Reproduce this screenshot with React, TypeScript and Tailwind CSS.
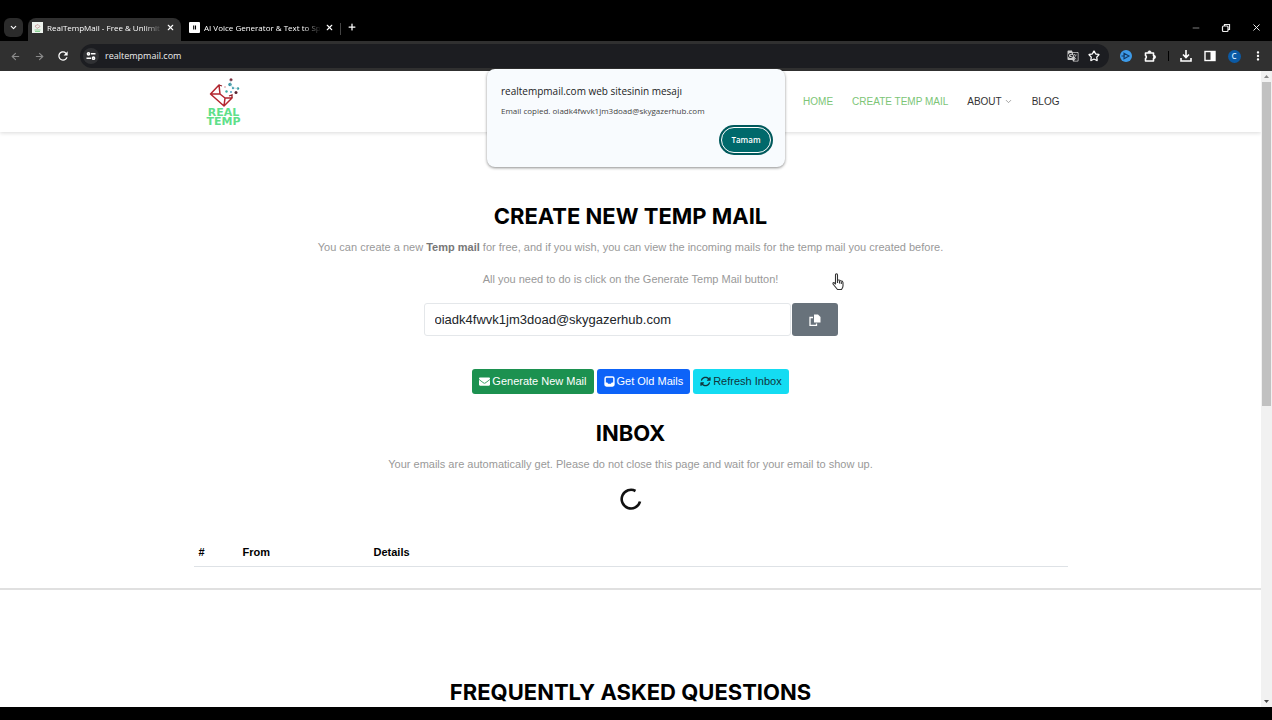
import React, { useState } from 'react';
import {
  ArrowLeft,
  ArrowRight,
  ChevronDown,
  Minus,
  Plus,
  Star,
  X,
} from 'lucide-react';
import { FaEnvelope } from 'react-icons/fa';
import { FaArrowsRotate } from 'react-icons/fa6';
import { MdGTranslate, MdMoreVert, MdRefresh } from 'react-icons/md';

const EMAIL = 'oiadk4fwvk1jm3doad@skygazerhub.com';

const uiFont = "font-['Open_Sans','Noto_Sans',sans-serif]";
const headingFont = "font-['Inter','Open_Sans',sans-serif]";

const TabStrip: React.FC = () => (
  <div className="flex h-6 items-end bg-black pl-1 text-white">
    <button type="button" aria-label="Search tabs" className="mb-1 flex h-[19px] w-[19px] items-center justify-center rounded-md bg-[#2b2b2b]">
      <ChevronDown size={9} strokeWidth={3} />
    </button>
    <div className="ml-[5px] flex h-[23px] w-[153px] items-center rounded-t-lg bg-[#303030] pr-1.5 pb-1 pl-1">
      <svg viewBox="0 0 11 11" className="h-[11px] w-[11px] shrink-0">
        <rect width="11" height="11" fill="#eef3ee" />
        <path d="M3 4l3-1.500 2 2-3 2z" fill="none" stroke="#c08a8a" strokeWidth=".7" />
        <path d="M2.500 8h6M3 9.500h5" stroke="#7fce8b" strokeWidth=".9" />
      </svg>
      <span className="ml-1 flex-1 mask-r-from-85% text-[8px] font-medium whitespace-nowrap">
        RealTempMail - Free &amp; Unlimit
      </span>
      <button type="button" aria-label="Close tab" className="ml-1">
        <X size={9} strokeWidth={3} />
      </button>
    </div>
    <div className="flex h-[23px] w-[155px] items-center pr-1 pb-1 pl-2">
      <svg viewBox="0 0 11 11" className="h-[11px] w-[11px] shrink-0">
        <rect width="11" height="11" rx="1" fill="#fff" />
        <path d="M4.700 3.500v4M6.500 3.500v4" stroke="#000" strokeWidth="1.100" />
      </svg>
      <span className="ml-1 flex-1 mask-r-from-85% text-[8px] font-medium whitespace-nowrap">
        AI Voice Generator &amp; Text to Sp
      </span>
      <button type="button" aria-label="Close tab" className="ml-1">
        <X size={9} strokeWidth={3} />
      </button>
    </div>
    <div className="mb-1.5 ml-1 h-3 w-px bg-[#444]" />
    <button type="button" aria-label="New tab" className="mb-[9px] ml-1.5">
      <Plus size={10} strokeWidth={3} />
    </button>
    <div className="mb-2 ml-auto flex items-center gap-5 pr-2.5">
      <button type="button" aria-label="Minimize">
        <Minus size={10} color="#999" />
      </button>
      <button type="button" aria-label="Restore">
        <svg viewBox="0 0 10 10" className="h-2.5 w-2.5" fill="none" stroke="#eee" strokeWidth="1.200">
          <rect x="1.500" y="3" width="5.500" height="5.500" rx="1" />
          <path d="M3.500 3V1.500H8.500V6.500H7" />
        </svg>
      </button>
      <button type="button" aria-label="Close">
        <X size={11} strokeWidth={2} />
      </button>
    </div>
  </div>
);

const toolButton = 'flex h-6 w-6 shrink-0 items-center justify-center';

const Toolbar: React.FC = () => (
  <div className="flex h-[30px] items-center bg-[#303030] pr-0.5 pl-[3px] text-white">
    <button type="button" aria-label="Back" className={toolButton}>
      <ArrowLeft size={11} color="#8a8a8a" strokeWidth={2.5} />
    </button>
    <button type="button" aria-label="Forward" className={toolButton}>
      <ArrowRight size={11} color="#8a8a8a" strokeWidth={2.5} />
    </button>
    <button type="button" aria-label="Reload" className={toolButton}>
      <MdRefresh size={14} />
    </button>
    <div className="ml-[5px] flex h-6 flex-1 items-center rounded-full bg-[#1c1d21] pr-[9px] pl-[3px]">
      <button type="button" aria-label="Site information" className="flex h-4 w-4 items-center justify-center rounded-full bg-[#303134]">
        <svg viewBox="0 0 10 10" className="h-2.5 w-2.5" fill="none" stroke="#fff" strokeWidth="1.500">
          <circle cx="2.500" cy="2.800" r="1.100" />
          <path d="M5 2.800h4.500M.5 7.200H5" />
          <circle cx="7.500" cy="7.200" r="1.100" />
        </svg>
      </button>
      <input
        type="text"
        aria-label="Address"
        defaultValue="realtempmail.com"
        className="ml-1.5 min-w-0 flex-1 bg-transparent text-[9px] font-medium text-[#eee] outline-none"
      />
      <button type="button" aria-label="Translate this page" className="mr-[9px]">
        <MdGTranslate size={12} color="#ccc" />
      </button>
      <button type="button" aria-label="Bookmark this page">
        <Star size={12} strokeWidth={2.5} />
      </button>
    </div>
    <button type="button" aria-label="Media extension" className={`${toolButton} ml-[5px]`}>
      <svg viewBox="0 0 12 12" className="h-3 w-3">
        <circle cx="6" cy="6" r="6" fill="#3d9be9" />
        <path d="M4 3.200l5 2.800-5 2.800zM1.500 6H5" fill="none" stroke="#123a66" strokeWidth="1.100" />
      </svg>
    </button>
    <button type="button" aria-label="Extensions" className={toolButton}>
      <svg viewBox="0 0 14 14" className="h-3.5 w-3.5">
        <path d="M2.500 4h8v2.700a1.600 1.600 0 0 1 0 2.600V12h-8V9.500a1.700 1.700 0 0 0 0-3z" fill="none" stroke="#fff" strokeWidth="1.600" strokeLinejoin="round" />
        <path d="M4.800 3.500a1.700 1.700 0 0 1 3.400 0zM11 6.300a1.700 1.700 0 0 1 0 3.400z" fill="#fff" stroke="#fff" strokeWidth=".6" />
      </svg>
    </button>
    <div className="flex w-3 justify-center">
      <span className="h-2.5 w-px bg-black" />
    </div>
    <button type="button" aria-label="Downloads" className={toolButton}>
      <svg viewBox="0 0 12 12" className="h-3 w-3" fill="none" stroke="#fff" strokeWidth="1.600">
        <path d="M6 0v7M3 4.500l3 3 3-3M1 8v3h10V8" />
      </svg>
    </button>
    <button type="button" aria-label="Side panel" className={toolButton}>
      <svg viewBox="0 0 12 12" className="h-3 w-3">
        <rect x="1" y="1.500" width="10" height="9" fill="none" stroke="#fff" strokeWidth="1.400" />
        <rect x="6.500" y="1.500" width="4.500" height="9" fill="#fff" />
      </svg>
    </button>
    <button type="button" aria-label="Profile" className={toolButton}>
      <span className="flex h-[13px] w-[13px] items-center justify-center rounded-full bg-[#0b5aa5] text-[8px] font-semibold text-[#cfe6ff]">
        C
      </span>
    </button>
    <button type="button" aria-label="Menu" className={toolButton}>
      <MdMoreVert size={14} />
    </button>
  </div>
);

const Logo: React.FC = () => (
  <a href="#home" className="flex w-[38px] flex-col items-center text-center font-['DejaVu_Sans',sans-serif] text-[11px] leading-[9px] font-bold text-[#5fe08a]">
    <svg viewBox="0 0 38 30" className="h-[30px] w-[38px]" fill="none">
      <path
        d="M5.500 16L14 7l1 9 5 4h7l-8 8zM5.500 16H15M20 20l-1 8"
        stroke="#b3262f"
        strokeWidth="1.500"
        strokeLinejoin="round"
      />
      <path d="M14 7l3 1M27 20v-3l-3 1" stroke="#8f1f28" strokeWidth="1.300" />
      <circle cx="26" cy="1.800" r="1.500" fill="#7a3040" />
      <circle cx="25" cy="6.500" r="1.700" fill="#2e8fa0" />
      <circle cx="28" cy="10" r="1.200" fill="#4aa3b5" />
      <circle cx="33" cy="10.500" r="1.200" fill="#2f9aa0" />
      <circle cx="31" cy="14.500" r="1.500" fill="#5b2430" />
      <circle cx="21.500" cy="13.500" r="1.200" fill="#3aa7a0" />
      <circle cx="26" cy="14" r=".9" fill="#3f9cc0" />
      <circle cx="20" cy="9" r=".7" fill="#c46a72" />
      <path d="M26 2l-1 5 4 3 4 .5" stroke="#9cc9cf" strokeWidth=".5" />
    </svg>
    <span>
      REAL
      <br />
      TEMP
    </span>
  </a>
);

const Header: React.FC = () => (
  <header className="h-[61px] bg-white shadow-[0_1px_4px_rgba(0,0,0,0.15)]">
    <div className="mx-auto flex h-full max-w-[874px] items-center justify-between pr-2 pl-[11px]">
      <Logo />
      <nav className="flex items-center gap-[19px] text-[10px] text-[#333]">
        <a href="#home" className="text-[#7cc576]">HOME</a>
        <a href="#create" className="text-[#7cc576]">CREATE TEMP MAIL</a>
        <a href="#about" className="flex items-center gap-0.5">
          ABOUT
          <ChevronDown size={9} color="#888" />
        </a>
        <a href="#blog">BLOG</a>
      </nav>
    </div>
  </header>
);

interface DialogProps {
  onClose: () => void;
}

const CopiedDialog: React.FC<DialogProps> = ({ onClose }) => (
  <div
    role="alertdialog"
    aria-label="realtempmail.com"
    className={`absolute top-[69px] left-1/2 w-[298px] -translate-x-1/2 rounded-lg bg-[#f8fbfe] px-3.5 pt-[15px] pb-3.5 text-[#222] shadow-[0_1px_3px_rgba(0,0,0,0.45)] ${uiFont}`}
  >
    <h2 className="text-[10px] leading-[14px] font-medium">realtempmail.com web sitesinin mesajı</h2>
    <p className="mt-1.5 text-[8px] leading-[14px] text-[#444]">Email copied. {EMAIL}</p>
    <div className="mt-[9px] flex justify-end">
      <button
        type="button"
        onClick={onClose}
        className="h-[26px] w-[50px] rounded-full border border-white bg-[#00696b] text-[8px] font-semibold text-white ring-2 ring-[#00595c]"
      >
        Tamam
      </button>
    </div>
  </div>
);

const HandCursor: React.FC = () => (
  <svg viewBox="0 0 12 18" className="pointer-events-none absolute top-0.5 left-full h-[18px] w-3" fill="#fff" stroke="#333" strokeWidth="1.100" strokeLinejoin="round">
    <path d="M3.500 11V2q0-1.200 1-1.200t1 1.200v5q2.300-.3 3 .8 2.300 0 2.500 1.700v3.500q0 1.500-1.500 3.500H5.500Q3 13.500 1 11q-.3-1.600 1-1.400z" />
    <path d="M5.500 7v3M7.500 8v2.500M9.300 8.500V11" />
  </svg>
);

const actionButton = 'flex h-[25px] items-center gap-0.5 rounded-[3px] px-[7px] text-[11px]';

const MailSection: React.FC = () => (
  <section className="flex flex-col items-center border-b-2 border-[#e0e0e0] pt-[70px] pb-[21px] text-center">
    <h1 className={`text-[22px] leading-7 font-bold text-black ${headingFont}`}>CREATE NEW TEMP MAIL</h1>
    <p className="mt-[9px] text-[11px] leading-4 text-[#999]">
      You can create a new <strong className="text-[#777]">Temp mail</strong> for free, and if you wish, you can view the
      incoming mails for the temp mail you created before.
    </p>
    <div className="relative mt-4 w-[402px]">
      <p className="text-[11px] leading-4 text-[#999]">All you need to do is click on the Generate Temp Mail button!</p>
      <HandCursor />
    </div>

    <div className="mt-4 flex w-[414px] gap-px">
      <input
        type="text"
        aria-label="Temp mail address"
        readOnly
        value={EMAIL}
        className="h-[33px] min-w-0 flex-1 rounded-[3px] border border-[#e4e7ea] px-2.5 text-[13px] text-[#212529] outline-none"
      />
      <button type="button" aria-label="Copy" className="flex h-[33px] w-[46px] items-center justify-center rounded-[3px] bg-[#68727b] text-white">
        <svg viewBox="0 0 12 12" className="h-3 w-3">
          <path d="M5 .5h4L11.500 3v5.500H5z" fill="currentColor" />
          <path d="M4 3.500H1v8h6.500V9.500" fill="none" stroke="currentColor" strokeWidth="1.300" />
        </svg>
      </button>
    </div>

    <div className="mt-[33px] flex gap-[3px]">
      <button type="button" className={`${actionButton} bg-[#1c9150] text-white`}>
        <FaEnvelope size={11} />
        Generate New Mail
      </button>
      <button type="button" className={`${actionButton} bg-[#0d63f8] text-white`}>
        <svg viewBox="0 0 12 12" className="h-[11px] w-[11px]">
          <rect x="1.200" y="1.200" width="9.600" height="9.600" rx="1.500" fill="none" stroke="currentColor" strokeWidth="1.600" />
          <path d="M1 7h2.500l1 1.500h3l1-1.500H11v4H1z" fill="currentColor" />
        </svg>
        Get Old Mails
      </button>
      <button type="button" className={`${actionButton} bg-[#14dcf2] text-[#10353c]`}>
        <FaArrowsRotate size={11} />
        Refresh Inbox
      </button>
    </div>

    <h2 className={`mt-[25px] text-[22px] leading-7 font-bold text-black ${headingFont}`}>INBOX</h2>
    <p className="mt-[9px] text-[11px] leading-4 text-[#999]">
      Your emails are automatically get. Please do not close this page and wait for your email to show up.
    </p>
    <svg viewBox="0 0 22 22" className="mt-4 h-[22px] w-[22px]" fill="none" stroke="#111" strokeWidth="2.600" role="status" aria-label="Loading">
      <path d="M15.500 3A9.300 9.300 0 1 0 20 13.500" />
    </svg>

    <table className="mt-7 w-full max-w-[874px] table-fixed border-b border-[#dee2e6] text-left text-[11px] leading-[18px] text-black">
      <thead>
        <tr>
          <th scope="col" className="w-11 p-[5px]">#</th>
          <th scope="col" className="w-[131px] p-[5px]">From</th>
          <th scope="col" className="p-[5px]">Details</th>
        </tr>
      </thead>
    </table>
  </section>
);

const ScrollBar: React.FC = () => (
  <div className="flex w-[11px] shrink-0 flex-col items-center bg-[#f1f1f1]" aria-hidden="true">
    <svg viewBox="0 0 11 11" className="h-[11px] w-[11px]">
      <path d="M3 7l2.500-3L8 7z" fill="#888" />
    </svg>
    <div className="h-[51%] w-[9px] bg-[#c1c1c1]" />
    <svg viewBox="0 0 11 11" className="mt-auto h-[11px] w-[11px]">
      <path d="M3 4l2.500 3L8 4z" fill="#444" />
    </svg>
  </div>
);

const App: React.FC = () => {
  const [dialogOpen, setDialogOpen] = useState(true);

  return (
    <div className="relative flex h-screen flex-col overflow-hidden bg-black pt-[17px] pb-[13px]">
      <div className={uiFont}>
        <TabStrip />
        <Toolbar />
      </div>
      <div className="flex min-h-0 flex-1 bg-white font-['Liberation_Sans',Arial,sans-serif]">
        <main className="min-w-0 flex-1 overflow-hidden">
          <Header />
          <MailSection />
          <section className="pt-[88px] text-center">
            <h2 className={`text-[22px] leading-7 font-bold text-black ${headingFont}`}>FREQUENTLY ASKED QUESTIONS</h2>
          </section>
        </main>
        <ScrollBar />
      </div>
      {dialogOpen && <CopiedDialog onClose={() => setDialogOpen(false)} />}
    </div>
  );
};

export default App;
